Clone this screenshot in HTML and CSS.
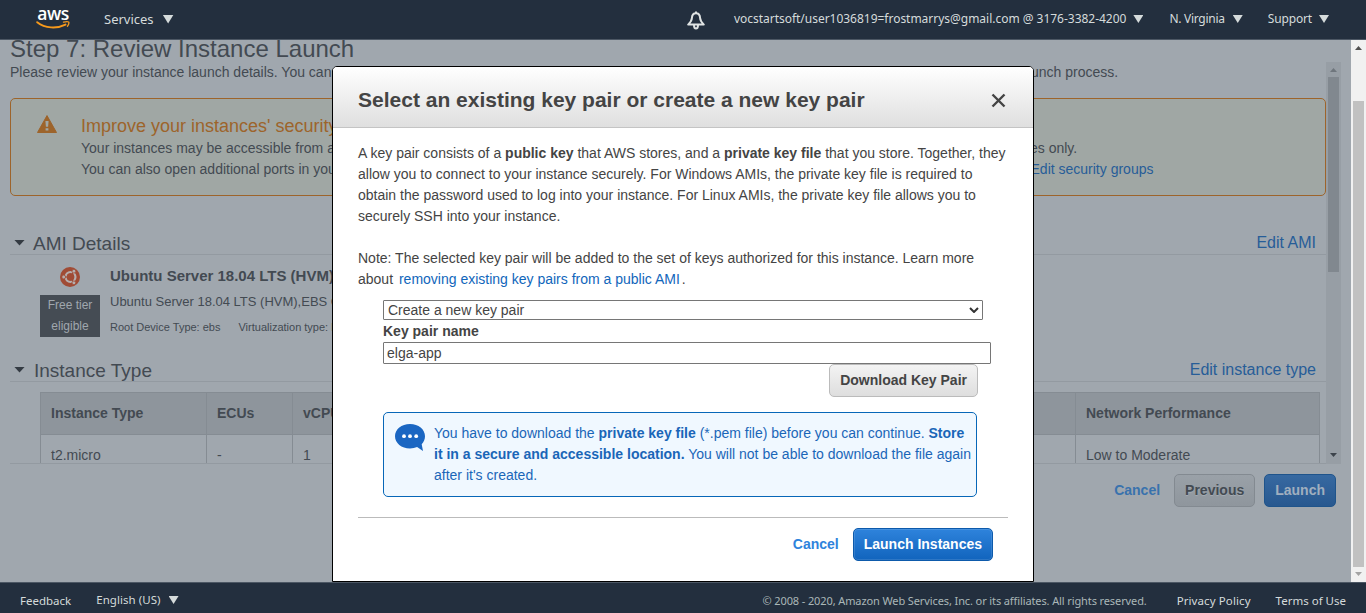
FILE: index.html
```html
<!DOCTYPE html>
<html lang="en">
<head>
<meta charset="utf-8">
<title>Launch instance wizard | EC2 Management Console</title>
<link rel="stylesheet" href="styles.css">
</head>
<body>
<header class="nav">
  <div class="logo">
    <span class="logo-word">aws</span>
    <svg class="logo-smile" width="34" height="8" viewBox="0 0 34 8"><path d="M1.200 1.200C9 7.600 21 7.900 29.500 3.600" fill="none" stroke="#f79a1c" stroke-width="1.900" stroke-linecap="round"/><path d="M27.500 1.200c2-.5 4.300-.7 5.100-.2.500.6 0 2.600-1.200 4.300" fill="none" stroke="#f79a1c" stroke-width="1.300" stroke-linecap="round"/></svg>
  </div>
  <span class="nav-services">Services</span><i class="caret caret-l"></i>
  <svg class="bell" width="18" height="19" viewBox="0 0 18 19" fill="none" stroke="#dfe3e3" stroke-width="2" stroke-linejoin="round"><path d="M9 2.200C6.200 2.200 5 4.400 4.900 7c-.1 3-1.600 4.500-3.700 6.600h15.600c-2.100-2.100-3.600-3.600-3.700-6.600C13 4.400 11.800 2.200 9 2.200zM9 .6v1.600M7 14.200c0 4.300 4 4.300 4 0"/></svg>
  <span class="nav-account">vocstartsoft/user1036819=frostmarrys@gmail.com @ 3176-3382-4200</span><i class="caret"></i>
  <span class="nav-region">N. Virginia</span><i class="caret caret-w"></i>
  <span class="nav-support">Support</span><i class="caret"></i>
</header>
<main class="main">
  <section class="page">
    <h1 class="title">Step 7: Review Instance Launch</h1>
    <div class="scroll">
      <div class="scroll-body">
        <p class="intro">Please review your instance launch details. You can go back to edit changes for each section. Click <b>Launch</b> to assign a key pair to your instance and complete the launch process.</p>
        <div class="warning">
          <svg class="warn-icon" width="20" height="18" viewBox="0 0 20 18"><path d="M10 .6 19.500 17.500H.5z" fill="#9d642b" stroke="#9d642b" stroke-linejoin="round"/><path d="M8.400 6h3.200l-.5 5.800H8.900zM8.600 13.200h2.800v2.300H8.600z" fill="#a0a7a4"/></svg>
          <div class="warn-text">
            <h2 class="warn-title">Improve your instances' security. Your security group is open to the world.</h2>
            <p class="warn-line"><span>Your instances may be accessible from any IP address. We recommend that you update your</span><span>security group rules to allow access from known IP addresses only.</span></p>
            <p class="warn-line second"><span>You can also open additional ports in your security group to facilitate access to the application or</span><span>service you're running, e.g., HTTP (80) for web servers. <a class="dim-link">Edit security groups</a></span></p>
          </div>
        </div>
        <div class="section-head ami-head"><i class="twist"></i><h2 class="section-title">AMI Details</h2><a class="section-link">Edit AMI</a></div>
        <div class="ami">
          <div class="ami-side">
            <svg width="20" height="20" viewBox="0 0 20 20"><circle cx="10" cy="10" r="10" fill="#a04b35"/><circle cx="10.500" cy="10" r="4.900" fill="none" stroke="#b5aeae" stroke-width="2.300"/><path d="M10.500 10H3M10.500 10l3.800-6.500M10.500 10l3.800 6.500" stroke="#a04b35" stroke-width="1"/><circle cx="10.500" cy="10" r="3.700" fill="#a04b35"/><g fill="#b5aeae" stroke="#a04b35" stroke-width=".8"><circle cx="3.700" cy="10" r="1.900"/><circle cx="13.900" cy="4.200" r="1.900"/><circle cx="13.900" cy="15.800" r="1.900"/></g></svg>
            <span class="free">Free tier<br>eligible</span>
          </div>
          <div class="ami-text">
            <h3 class="ami-name">Ubuntu Server 18.04 LTS (HVM), SSD Volume Type</h3>
            <p class="ami-desc">Ubuntu Server 18.04 LTS (HVM),EBS General Purpose (SSD) Volume Type.</p>
            <p class="ami-meta"><span>Root Device Type: ebs</span><span>Virtualization type: hvm</span></p>
          </div>
        </div>
        <div class="section-head"><i class="twist"></i><h2 class="section-title type-title">Instance Type</h2><a class="section-link">Edit instance type</a></div>
        <div class="grid">
          <div class="th">Instance Type</div><div class="th">ECUs</div><div class="th">vCPUs</div><div class="th">Memory (GiB)</div><div class="th">Instance Storage (GB)</div><div class="th">EBS-Optimized Available</div><div class="th">Network Performance</div>
          <div class="td">t2.micro</div><div class="td">-</div><div class="td">1</div><div class="td">1</div><div class="td">EBS only</div><div class="td">-</div><div class="td">Low to Moderate</div>
        </div>
      </div>
      <div class="inner-bar"><i class="up"></i><i class="inner-thumb"></i><i class="down"></i></div>
    </div>
    <div class="actions">
      <a class="cancel dim-cancel">Cancel</a>
      <span class="btn dim-grey">Previous</span>
      <span class="btn dim-blue">Launch</span>
    </div>
  </section>
  <div class="outer-bar"><i class="up"></i><i class="outer-thumb"></i><i class="down"></i></div>
</main>
<footer class="footer">
  <span class="f-feedback">Feedback</span>
  <span class="f-lang">English (US)</span><i class="caret caret-f"></i>
  <span class="f-copy">© 2008 - 2020, Amazon Web Services, Inc. or its affiliates. All rights reserved.</span>
  <span class="f-privacy">Privacy Policy</span>
  <span class="f-terms">Terms of Use</span>
</footer>

<div class="modal" role="dialog">
  <div class="modal-head">
    <h2 class="modal-title">Select an existing key pair or create a new key pair</h2>
    <svg width="15" height="15" viewBox="0 0 15 15"><path d="m1.500 1.500 12 12m0-12-12 12" stroke="#444" stroke-width="2.400"/></svg>
  </div>
  <div class="modal-body">
    <p class="para">A key pair consists of a <b>public key</b> that AWS stores, and a <b>private key file</b> that you store. Together, they allow you to connect to your instance securely. For Windows AMIs, the private key file is required to obtain the password used to log into your instance. For Linux AMIs, the private key file allows you to securely SSH into your instance.</p>
    <p class="para note">Note: The selected key pair will be added to the set of keys authorized for this instance. Learn more about <a class="link">removing existing key pairs from a public AMI</a>.</p>
    <div class="form">
      <div class="select"><span>Create a new key pair</span><svg width="10" height="6" viewBox="0 0 10 6"><path d="m1 1 4 4 4-4" fill="none" stroke="#333" stroke-width="2"/></svg></div>
      <label class="label">Key pair name</label>
      <div class="input">elga-app</div>
      <div class="download"><span class="btn grey">Download Key Pair</span></div>
      <div class="info">
        <svg class="bubble" width="30" height="27" viewBox="0 0 30 27"><path d="M15 0C6.500 0 0 5.400 0 12.200s6.500 12.200 15 12.200c2.600 0 5-.5 7.100-1.400l5.900 4-1.300-6.800c2.100-2.100 3.300-4.900 3.300-8C30 5.400 23.500 0 15 0z" fill="#1a66c2"/><circle cx="9" cy="12.200" r="1.900" fill="#fff"/><circle cx="15" cy="12.200" r="1.900" fill="#fff"/><circle cx="21.200" cy="12.200" r="1.900" fill="#fff"/></svg>
        <p class="info-text">You have to download the <b>private key file</b> (*.pem file) before you can continue. <b>Store it in a secure and accessible location.</b> You will not be able to download the file again after it's created.</p>
      </div>
    </div>
    <div class="modal-foot">
      <a class="cancel">Cancel</a>
      <span class="btn blue">Launch Instances</span>
    </div>
  </div>
</div>
</body>
</html>
```
FILE: styles.css
```css
* { box-sizing: border-box; }
html, body { height: 100%; }
body {
  margin: 0;
  display: flex;
  flex-direction: column;
  overflow: hidden;
  background: #a0a7ae;
  color: #434a52;
  font: 14px/21px "Liberation Sans", Arial, sans-serif;
}
h1, h2, h3, p { margin: 0; font-weight: normal; }
svg { display: block; flex: none; }

/* Top navigation */
.nav {
  flex: none;
  height: 40px;
  padding: 0 37px 1px 36px;
  display: flex;
  align-items: center;
  background: #232f3e;
  border-bottom: 1px solid #4c5764;
  color: #d5dbdb;
  font: 12px/18px "Noto Sans", sans-serif;
  white-space: nowrap;
}
.logo { width: 34px; height: 25px; margin: 0 34px 5px 0; display: flex; flex-direction: column; align-items: center; justify-content: flex-end; }
.logo-word { height: 17px; color: #fff; font: 600 17.5px/17px "Open Sans", sans-serif; letter-spacing: -.4px; }
.logo-smile { margin-top: -1px; }
.nav-services { font-size: 13px; }
.caret { flex: none; width: 10px; height: 8px; margin-left: 7px; background: #d5dbdb; clip-path: polygon(0 0, 100% 0, 50% 100%); }
.caret-l { width: 11px; height: 9px; margin-left: 9px; }
.caret-w { margin-left: 8px; }
.caret-f { margin-left: 8px; margin-bottom: 2px; }
.bell { margin: 3px 29px 0 auto; }
.nav-account { letter-spacing: -.02px; }
.nav-region { margin-left: 26px; letter-spacing: -.27px; }
.nav-support { margin-left: 25px; letter-spacing: -.15px; }

/* Page behind the dialog */
.main { flex: 1; min-height: 0; display: flex; }
.page { flex: 1; min-width: 0; overflow: hidden; padding-left: 10px; }
.title { height: 22px; font-size: 24px; line-height: 18px; white-space: nowrap; }
.scroll { display: flex; width: 1331px; height: 402px; }
.scroll-body { width: 1316px; overflow: hidden; white-space: nowrap; border-bottom: 1px solid #939aa1; }
.intro { height: 36px; }
.warning { height: 98px; padding: 16px 0 0 26px; display: flex; border: 1px solid #9d642b; border-radius: 5px; background: #a0a7a4; }
.warn-text { margin-left: 24px; }
.warn-title { height: 23px; font-size: 18px; line-height: 22px; color: #9d642b; }
.warn-line { display: flex; gap: 4px; }
.second { gap: 6px; }
.dim-link, .section-link { color: #275d98; }
.section-head { height: 27px; display: flex; align-items: center; border-bottom: 1px solid #939aa1; }
.ami-head { margin-top: 32px; }
.twist { width: 11px; height: 6px; margin: 3px 0 0 4px; background: #343b43; clip-path: polygon(0 0, 100% 0, 50% 100%); }
.section-title { margin: 5px 0 0 8px; font-size: 19px; line-height: 24px; }
.type-title { margin-left: 9px; }
.section-link { margin: 2px 10px 0 auto; font-size: 16px; }
.ami { height: 100px; display: flex; padding: 12px 0 0 30px; }
.ami-side { width: 60px; display: flex; flex-direction: column; align-items: center; gap: 8px; }
.free { width: 60px; height: 42px; background: #454c54; color: #a0a7ae; font-size: 12px; text-align: center; }
.ami-text { margin-left: 10px; }
.ami-name { margin-top: -1px; font-size: 15px; font-weight: bold; line-height: 20px; }
.ami-desc { margin-top: 5px; font-size: 13px; }
.ami-meta { margin-top: 5px; display: flex; gap: 18px; font-size: 11px; }
.grid { margin: 10px 0 0 30px; width: 1280px; display: grid; grid-template-columns: 166px 86px 90px 150px 250px 293px 244px; grid-template-rows: 42px 42px; border: solid #858c93; border-width: 1px 0 0 1px; }
.th, .td { padding: 10px 10px 0; border: solid #858c93; border-width: 0 1px 1px 0; }
.th { background: #8e959c; font-weight: bold; }
.inner-bar, .outer-bar { width: 15px; display: flex; flex-direction: column; align-items: center; }
.inner-bar { background: #979ea5; }
.up, .down { width: 7px; height: 4px; background: #6f767d; }
.up { margin-top: 6px; clip-path: polygon(50% 0, 100% 100%, 0 100%); }
.down { margin: auto 0 7px; background: #3d444c; clip-path: polygon(0 0, 100% 0, 50% 100%); }
.inner-thumb { width: 11px; height: 195px; margin-top: 5px; background: #81888f; }
.outer-bar { background: #f1f1f1; }
.outer-bar .up { background: #505050; }
.outer-thumb { width: 11px; height: 466px; margin-top: 51px; background: #c1c1c1; }
.outer-bar .down { margin-bottom: 6px; background: #a3a3a3; }
.actions { display: flex; justify-content: flex-end; align-items: center; padding: 10px 15px 0 0; }

/* Buttons */
.cancel { margin-right: 14px; color: #2e83dc; font-weight: bold; }
.btn { height: 33px; padding: 5px 10px; border: 1px solid; border-radius: 5px; font-weight: bold; white-space: nowrap; }
.grey { background: linear-gradient(#f3f3f3, #dedede); border-color: #bbb; color: #444; }
.blue { background: linear-gradient(#2e83dc, #1164bd); border-color: #0d5aab; color: #fff; box-shadow: inset 0 0 0 1px rgba(255,255,255,.12); }
.dim-cancel { color: #3972ad; }
.dim-grey { background: linear-gradient(#9aa1a8, #8f969d); border-color: #838a91; text-shadow: 0 1px #a4abb2; }
.dim-blue { margin-left: 9px; background: linear-gradient(#3769a1, #28588f); border-color: #1f548b; color: #a0afbf; }

/* Footer */
.footer {
  flex: none;
  height: 31px;
  padding: 6px 20px 0;
  display: flex;
  align-items: center;
  background: #232f3e;
  border-top: 1px solid #4c5764;
  color: #d5dbdb;
  font: 11.5px/18px "Noto Sans", sans-serif;
  white-space: nowrap;
}
.f-lang { margin: 0 0 2px 25px; letter-spacing: .05px; }
.f-copy { margin: 0 0 1px auto; font-size: 11px; letter-spacing: -.11px; color: #aab7b8; }
.f-privacy { margin-left: 30px; letter-spacing: .1px; }
.f-terms { margin-left: 25px; }

/* Key pair dialog */
.modal {
  position: absolute;
  left: 332px;
  top: 66px;
  width: 702px;
  height: 516px;
  border: 1px solid #000;
  border-radius: 5px 5px 0 0;
  background: #fff;
  color: #444;
  overflow: hidden;
}
.modal-head { height: 61px; padding: 6px 27px 0 25px; display: flex; align-items: center; justify-content: space-between; background: linear-gradient(#fff, #dfdfdf); border-bottom: 1px solid #c4c4c4; }
.modal-title { font-size: 21px; line-height: 26px; font-weight: bold; }
.modal-body { padding: 15px 25px 0; }
.para { width: 650px; }
.note { margin-top: 21px; }
.link { margin: 0 2px; color: #1166bb; }
.form { padding: 10px 0 0 25px; }
.select { width: 600px; height: 20px; padding: 0 3px 0 4px; display: flex; align-items: center; justify-content: space-between; border: 1px solid #767676; border-radius: 1px; }
.label { display: block; height: 22px; padding-top: 1px; font-weight: bold; }
.input { width: 608px; height: 22px; padding-left: 3px; line-height: 20px; border: 1px solid #767676; border-radius: 1px; }
.download { width: 595px; display: flex; justify-content: flex-end; }
.info { width: 594px; height: 85px; margin-top: 15px; padding: 10px 0 0 11px; display: flex; border: 1px solid #0767b8; border-radius: 5px; background: #f0f8ff; color: #1a66b8; }
.bubble { margin-top: 1px; }
.info-text { width: 540px; margin-left: 9px; }
.modal-foot { width: 650px; margin-top: 20px; padding: 10px 15px 0 0; display: flex; align-items: center; justify-content: flex-end; border-top: 1px solid #bbb; }
```
